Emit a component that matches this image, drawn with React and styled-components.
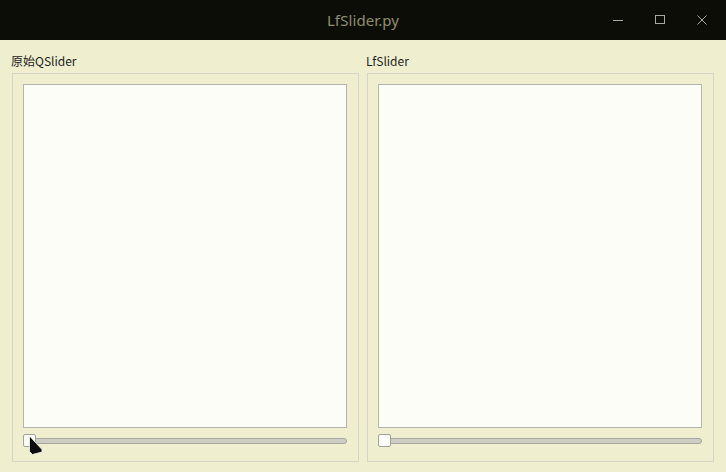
import React from 'react';
import styled, { createGlobalStyle } from 'styled-components';

const GlobalStyle = createGlobalStyle`
  html, body {
    margin: 0;
    padding: 0;
    background: #efefcf;
    font-family: "Noto Sans CJK SC", "Noto Sans", sans-serif;
  }
`;

const Window = styled.div`
  width: 726px;
  height: 472px;
  display: flex;
  flex-direction: column;
  background: #efefcf;
  overflow: hidden;
`;

const TitleBar = styled.div`
  height: 40px;
  flex: none;
  display: grid;
  grid-template-columns: 1fr auto 1fr;
  align-items: center;
  background: #0d0d08;
`;

const Title = styled.div`
  grid-column: 2;
  font-family: "Noto Sans", sans-serif;
  font-size: 15px;
  color: #8d8d6e;
  letter-spacing: 0.1px;
`;

const Controls = styled.div`
  grid-column: 3;
  justify-self: end;
  display: flex;
  align-items: center;
  gap: 22px;
  padding-right: 14px;
`;

const CtrlButton = styled.div`
  width: 20px;
  height: 20px;
  display: flex;
  align-items: center;
  justify-content: center;
`;

const Body = styled.div`
  flex: 1;
  display: grid;
  grid-template-columns: 1fr 1fr;
  gap: 8px;
  padding: 10px 12px 10px 12px;
  min-height: 0;
`;

const Column = styled.div`
  display: flex;
  flex-direction: column;
  min-height: 0;
`;

const Label = styled.div`
  height: 23px;
  line-height: 22px;
  font-size: 12px;
  color: #1e1e1e;
  margin-left: -1px;
`;

const Group = styled.div`
  flex: 1;
  display: flex;
  flex-direction: column;
  border: 1px solid #d6d6c8;
  padding: 10px 11px 14px 10px;
  min-height: 0;
`;

const View = styled.div`
  flex: 1;
  background: #fdfdf8;
  border: 1px solid #b4b4ae;
`;

const SliderRow = styled.div`
  position: relative;
  height: 13px;
  margin-top: 6px;
  display: flex;
  align-items: center;
`;

const Groove = styled.div`
  flex: 1;
  height: 4px;
  margin-left: 3px;
  background: #cdcdc2;
  border: 1px solid #a6a6a0;
  border-radius: 3px;
`;

const Handle = styled.div`
  position: absolute;
  left: ${p => p.$pos}px;
  top: 0;
  width: 11px;
  height: 11px;
  background: #fbfbf8;
  border: 1px solid #a2a29c;
  border-radius: 2px;
`;

const Cursor = styled.svg`
  position: absolute;
  left: 5px;
  top: 1px;
  pointer-events: none;
`;

const SliderPanel = ({ label, cursor }) => (
  <Column>
    <Label>{label}</Label>
    <Group>
      <View />
      <SliderRow>
        <Groove />
        <Handle $pos={0} />
        {cursor && (
          <Cursor width="16" height="21" viewBox="0 0 16 21">
            <path d="M1.5 1 L1.5 16.5 L4.5 19.5 L14 17 L14 14.5 Z" fill="#0c0c0c" stroke="#fafaf0" strokeWidth="0.8" strokeLinejoin="round" />
          </Cursor>
        )}
      </SliderRow>
    </Group>
  </Column>
);

export default function App() {
  return (
    <Window>
      <GlobalStyle />
      <TitleBar>
        <Title>LfSlider.py</Title>
        <Controls>
          <CtrlButton>
            <svg width="12" height="12" viewBox="0 0 12 12">
              <line x1="1" y1="6.5" x2="11" y2="6.5" stroke="#a9a9a4" strokeWidth="1" />
            </svg>
          </CtrlButton>
          <CtrlButton>
            <svg width="12" height="12" viewBox="0 0 12 12">
              <rect x="1.5" y="1.5" width="9" height="8" fill="none" stroke="#a9a9a4" strokeWidth="1" />
            </svg>
          </CtrlButton>
          <CtrlButton>
            <svg width="12" height="12" viewBox="0 0 12 12">
              <path d="M1.5 1.5 L10.5 10.5 M10.5 1.5 L1.5 10.5" stroke="#a9a9a4" strokeWidth="1" />
            </svg>
          </CtrlButton>
        </Controls>
      </TitleBar>
      <Body>
        <SliderPanel label="原始QSlider" cursor />
        <SliderPanel label="LfSlider" />
      </Body>
    </Window>
  );
}
